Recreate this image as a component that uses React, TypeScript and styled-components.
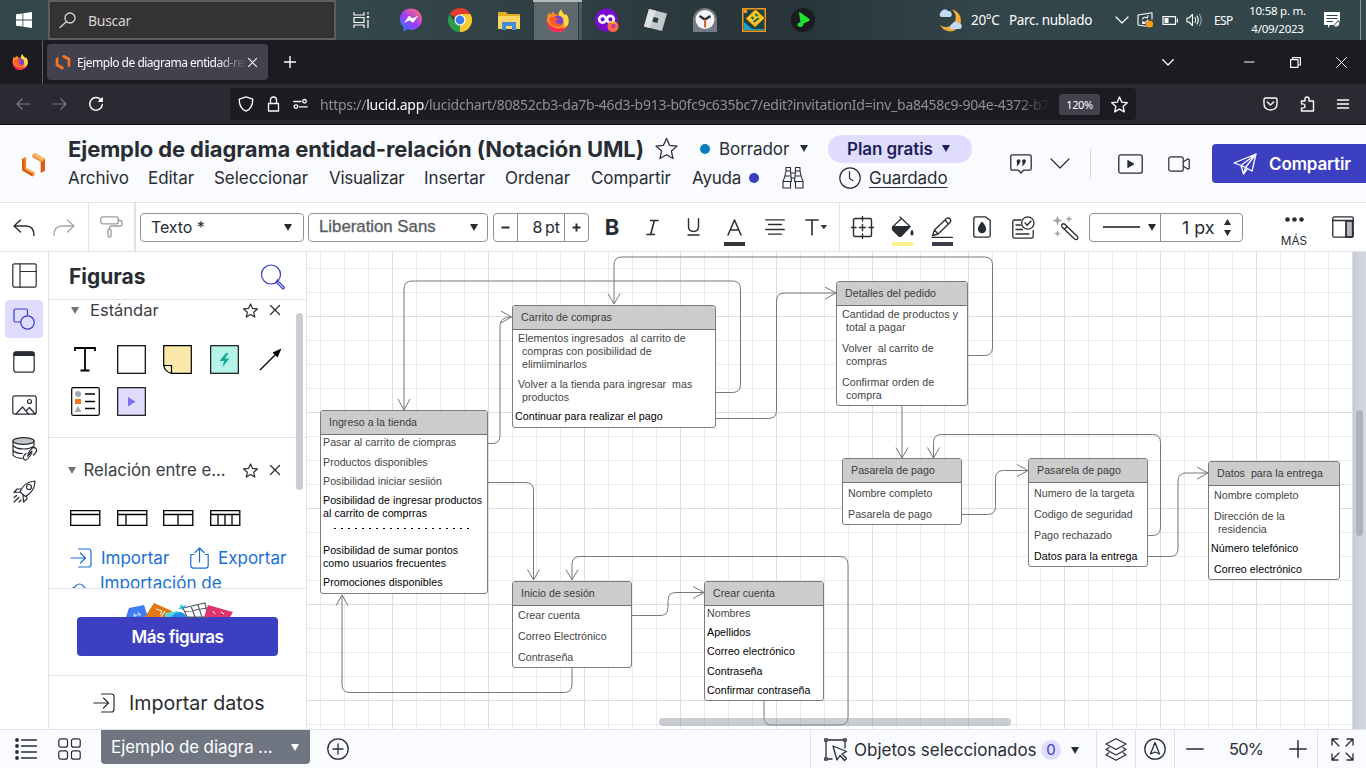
import React from "react";
import styled, { createGlobalStyle, css } from "styled-components";

const UI = '"Inter", "Liberation Sans", sans-serif';
const SYS = '"Noto Sans", "Open Sans", sans-serif';

const Global = createGlobalStyle`
  * { box-sizing: border-box; }
  html, body { margin: 0; padding: 0; }
  body { width: 1366px; height: 768px; overflow: hidden; background: #fff; color: #282c33; font-family: ${UI}; }
  svg { display: block; flex: none; overflow: visible; }
`;

const Screen = styled.div`
  display: flex;
  flex-direction: column;
  width: 1366px;
  height: 768px;
  overflow: hidden;
`;

const Icon = styled.svg<{ $w?: number }>`
  fill: none;
  stroke: currentColor;
  stroke-width: ${(p) => p.$w ?? 1.2};
  stroke-linecap: round;
  stroke-linejoin: round;
`;

/* ---------- Windows task bar ---------- */
const TaskBar = styled.div`
  display: flex;
  align-items: center;
  height: 40px;
  flex: none;
  color: #fff;
  font-family: ${SYS};
  background: linear-gradient(90deg, #34474b 0, #34474b 25%, #2f3f43 42%, #28343700 55%), linear-gradient(90deg, #293538 0, #293538 58%, #32454a 72%, #33474b 100%);
`;
const StartCell = styled.div`
  width: 48px;
  display: flex;
  justify-content: center;
`;
const SearchBox = styled.div`
  width: 288px;
  height: 40px;
  border: 2px solid #5d5f5f;
  background: #333;
  display: flex;
  align-items: center;
  padding-left: 9px;
  gap: 12px;
  font-size: 14px;
  letter-spacing: -0.3px;
  color: #d6d6d6;
`;
const AppCell = styled.div<{ $active?: boolean }>`
  width: 49px;
  height: 40px;
  display: flex;
  align-items: center;
  justify-content: center;
  ${(p) =>
    p.$active &&
    css`
      background: linear-gradient(90deg, #2d393c 0 1px, #5d696c 1px 45px, #2d393c 45px 46px, #4b5a5d 46px 49px);
      border-top: 2px solid #b4b8b8;
      padding-bottom: 2px;
    `}
`;
const Apps = styled.div`
  display: flex;
  padding-left: 1px;
  width: 602px;
`;
const Weather = styled.div`
  display: flex;
  align-items: center;
  width: 177px;
  font-size: 13.5px;
  letter-spacing: -0.32px;
  white-space: nowrap;
`;
const Temp = styled.span`
  width: 38px;
  margin-left: 8px;
`;
const Tray = styled.div`
  display: flex;
  align-items: center;
  gap: 8px;
`;
const Lang = styled.span`
  width: 35px;
  margin-left: 3px;
  font-size: 12px;
  letter-spacing: -0.67px;
`;
const Clock = styled.div`
  width: 57px;
  font-size: 11.5px;
  line-height: 18px;
  letter-spacing: -0.25px;
  text-align: center;
  white-space: nowrap;
  margin: 0 18px 1px 0;
`;
const DesktopEdge = styled.div`
  width: 1px;
  height: 40px;
  background: #8a9699;
  margin-left: 19px;
`;

/* ---------- Browser chrome ---------- */
const TabStrip = styled.div`
  display: flex;
  align-items: center;
  height: 44px;
  flex: none;
  background: #1c1b22;
  color: #fbfbfe;
  font-family: ${SYS};
`;
const PinnedTab = styled.div`
  width: 43px;
  height: 44px;
  border-right: 1px solid #5b5b66;
  display: flex;
  align-items: center;
  padding-left: 12px;
`;
const Tab = styled.div`
  width: 221px;
  height: 36px;
  margin-left: 4px;
  border-radius: 4px;
  background: #42414d;
  display: flex;
  align-items: center;
  padding: 0 11px 0 8px;
`;
const TabTitle = styled.div`
  width: 169px;
  margin-left: 6px;
  margin-right: 2px;
  overflow: hidden;
  white-space: nowrap;
  font-size: 12px;
  letter-spacing: -0.5px;
  mask-image: linear-gradient(90deg, #000 0, #000 83%, transparent 100%);
`;
const NewTab = styled.div`
  margin-left: 16px;
  width: 878px;
`;
const WindowButtons = styled.div`
  display: flex;
  align-items: center;
  gap: 35px;
`;
const NavBar = styled.div`
  display: flex;
  align-items: center;
  height: 41px;
  flex: none;
  background: #2b2a33;
  border-bottom: 1px solid #0c0c0d;
  color: #fbfbfe;
  font-family: ${SYS};
`;
const NavButtons = styled.div`
  display: flex;
  align-items: center;
  gap: 21px;
  width: 230px;
  padding-left: 16px;
`;
const Dim = styled.span`
  color: #7b7a86;
  display: flex;
`;
const UrlField = styled.div`
  width: 906px;
  height: 32px;
  border-radius: 4px;
  background: #1c1b22;
  display: flex;
  align-items: center;
  padding-left: 8px;
`;
const UrlIcons = styled.div`
  display: flex;
  align-items: center;
  gap: 13px;
  width: 82px;
`;
const Url = styled.div`
  width: 731px;
  overflow: hidden;
  white-space: nowrap;
  font-size: 14px;
  letter-spacing: -0.25px;
  color: #8f8f98;
  mask-image: linear-gradient(90deg, #000 0, #000 95%, transparent 100%);
  b { font-weight: 400; color: #fbfbfe; }
`;
const ZoomChip = styled.div`
  width: 41px;
  height: 21px;
  margin: 0 11px 0 8px;
  border-radius: 3px;
  background: #42414d;
  font-size: 11px;
  line-height: 21px;
  letter-spacing: -0.4px;
  text-align: center;
`;
const NavExtras = styled.div`
  display: flex;
  align-items: center;
  gap: 22px;
  margin-left: 127px;
`;

/* ---------- Document header ---------- */
const Header = styled.header`
  display: flex;
  height: 78px;
  flex: none;
  background: #fafbfe;
  border-bottom: 1px solid #dfe3e8;
`;
const LogoBox = styled.div`
  flex: none;
  width: 68px;
  padding: 27px 0 0 21px;
`;
const DocInfo = styled.div`
  flex: none;
  width: 942px;
  padding-top: 9px;
`;
const TitleRow = styled.div`
  display: flex;
  align-items: center;
  height: 29px;
  white-space: nowrap;
  font-size: 17px;
  letter-spacing: -0.08px;
`;
const Title = styled.h1`
  margin: 0;
  width: 587px;
  font-size: 22px;
  font-weight: 700;
  letter-spacing: -0.1px;
  color: #282c33;
`;
const StatusDot = styled.span`
  width: 10px;
  height: 10px;
  border-radius: 50%;
  background: #0c7cba;
  margin: 0 9px 0 22px;
`;
const Status = styled.span`
  width: 81px;
`;
const Caret = styled.span<{ $s?: number; $h?: number }>`
  width: 0;
  height: 0;
  flex: none;
  border-left: ${(p) => p.$s ?? 4}px solid transparent;
  border-right: ${(p) => p.$s ?? 4}px solid transparent;
  border-top: ${(p) => p.$h ?? 7}px solid currentColor;
`;
const PlanPill = styled.span`
  display: flex;
  align-items: center;
  gap: 9px;
  width: 144px;
  height: 28px;
  margin-left: 20px;
  padding-left: 19px;
  border-radius: 14px;
  background: #dfdcfe;
  color: #1f1c5c;
  font-weight: 600;
`;
const MenuRow = styled.nav`
  display: flex;
  align-items: center;
  height: 29px;
  font-size: 17px;
  letter-spacing: -0.05px;
  white-space: nowrap;
`;
const MenuItem = styled.span<{ $w: number; $ls?: number }>`
  width: ${(p) => p.$w}px;
  letter-spacing: ${(p) => p.$ls ?? -0.05}px;
`;
const HelpDot = styled.span`
  width: 10px;
  height: 10px;
  border-radius: 50%;
  background: #3a3ec4;
  margin-right: 23px;
`;
const ClockSlot = styled.span`
  margin-left: 35px;
`;
const Saved = styled.span`
  margin-left: 8px;
  text-decoration: underline;
  text-decoration-thickness: 1px;
  text-underline-offset: 3px;
`;
const HeaderTools = styled.div`
  display: flex;
  flex: none;
  align-items: center;
  width: 202px;
`;
const HeaderRule = styled.div`
  width: 1px;
  height: 29px;
  margin: 0 27px 0 20px;
  background: #d5d9df;
`;
const ShareButton = styled.button`
  flex: 1;
  height: 39px;
  margin-top: 19px;
  padding: 0 0 0 21px;
  border: 0;
  border-radius: 4px 0 0 4px;
  background: #3d3fc1;
  color: #fff;
  display: flex;
  align-items: center;
  gap: 12px;
  font: 600 17px ${UI};
  letter-spacing: -0.12px;
`;

/* ---------- Format toolbar ---------- */
const Toolbar = styled.div`
  display: flex;
  align-items: center;
  height: 49px;
  flex: none;
  background: #fff;
  border-bottom: 1px solid #dfe3e8;
`;
const ToolGroup = styled.div<{ $w: number; $rule?: number }>`
  display: flex;
  flex: none;
  align-items: center;
  height: 48px;
  width: ${(p) => p.$w}px;
  border-right: ${(p) => p.$rule ?? 0}px solid #dfe1e5;
`;
const Select = styled.div<{ $w: number; $gap: number; $fade?: boolean }>`
  width: ${(p) => p.$w}px;
  height: 29px;
  margin-left: ${(p) => p.$gap}px;
  padding: 0 11px 0 10px;
  border: 1px solid #8d939c;
  border-radius: 4px;
  display: flex;
  align-items: center;
  justify-content: space-between;
  font-size: 16px;
  letter-spacing: -0.1px;
  ${(p) =>
    p.$fade &&
    css`
      font-family: "Liberation Sans", Arial, sans-serif;
      padding-right: 9px;
      font-size: 16.8px;
      letter-spacing: 0;
    `}
`;
const FontName = styled.span`
  color: #54575d;
  -webkit-text-stroke: 0.35px #6a6d73;
`;
const Stepper = styled.div`
  display: flex;
  width: 96px;
  height: 29px;
  margin-left: 5px;
  border: 1px solid #8d939c;
  border-radius: 4px;
  line-height: 28px;
  font-size: 17px;
`;
const StepButton = styled.span`
  flex: 1;
  display: flex;
  align-items: center;
  justify-content: center;
`;
const StepValue = styled.span`
  width: 48px;
  border-left: 1px solid #8d939c;
  border-right: 1px solid #8d939c;
  text-align: right;
  padding-right: 4px;
  font-size: 16px;
  line-height: 27px;
  word-spacing: -2px;
`;
const ToolCell = styled.div<{ $w: number; $bar?: string }>`
  position: relative;
  flex: none;
  width: ${(p) => p.$w}px;
  height: 48px;
  display: flex;
  align-items: center;
  justify-content: center;
  ${(p) =>
    p.$bar &&
    css`
      &::after {
        content: "";
        position: absolute;
        left: calc(50% - 10.5px);
        bottom: 5px;
        width: 21px;
        height: 4px;
        background: ${p.$bar};
      }
    `}
`;
const BoldGlyph = styled.b`
  font-size: 22px;
  font-weight: 700;
`;
const LineStyle = styled.div`
  display: flex;
  flex: none;
  width: 154px;
  height: 29px;
  margin-left: 4px;
  border: 1px solid #8d939c;
  border-radius: 4px;
  align-items: center;
`;
const LineSample = styled.span`
  width: 37px;
  height: 2px;
  margin: 0 8px 0 13px;
  background: #4d5057;
`;
const LineWidth = styled.div`
  display: flex;
  align-items: center;
  height: 27px;
  margin-left: 4px;
  padding-left: 21px;
  border-left: 1px solid #8d939c;
  font-size: 17.8px;
  gap: 10px;
  white-space: nowrap;
`;
const More = styled.div`
  display: flex;
  flex: none;
  flex-direction: column;
  align-items: center;
  width: 30px;
  margin: 11px 23px 0 36px;
  gap: 13px;
  font-size: 11.8px;
  line-height: 13px;
`;

/* ---------- Work area ---------- */
const Main = styled.main`
  display: flex;
  height: 477px;
  flex: none;
`;
const Rail = styled.div`
  width: 49px;
  flex: none;
  border-right: 1px solid #dfe3e8;
  display: flex;
  flex-direction: column;
  align-items: center;
  padding-top: 4.500px;
  gap: 5.300px;
`;
const RailButton = styled.div<{ $active?: boolean }>`
  width: 38px;
  height: 38px;
  flex: none;
  border-radius: 4px;
  display: flex;
  align-items: center;
  justify-content: center;
  background: ${(p) => (p.$active ? "#dfdcfe" : "transparent")};
  color: ${(p) => (p.$active ? "#3a3ec4" : "#282c33")};
`;
const Panel = styled.aside`
  width: 258px;
  flex: none;
  border-right: 1px solid #dfe3e8;
  display: flex;
  flex-direction: column;
`;
const PanelHead = styled.div`
  height: 48px;
  flex: none;
  border-bottom: 1px solid #dfe3e8;
  display: flex;
  align-items: center;
  justify-content: space-between;
  padding: 1px 20px 0 20px;
  font-size: 21px;
  font-weight: 700;
`;
const PanelBody = styled.div`
  display: flex;
  height: 289px;
  flex: none;
  overflow: hidden;
  border-bottom: 1px solid #dfe3e8;
`;
const Sections = styled.div`
  width: 247px;
`;
const Section = styled.section<{ $h: number }>`
  width: 257px;
  height: ${(p) => p.$h}px;
  border-bottom: 1px solid #dfe3e8;
`;
const SectionHead = styled.div<{ $left: number; $gap: number; $top: number }>`
  display: flex;
  align-items: center;
  height: 20px;
  margin-top: ${(p) => p.$top}px;
  padding-left: ${(p) => p.$left}px;
  gap: ${(p) => p.$gap}px;
  color: #6d717a;
`;
const SectionName = styled.span<{ $w: number; $size: number }>`
  width: ${(p) => p.$w}px;
  font-size: ${(p) => p.$size}px;
  white-space: nowrap;
  color: #3a3e45;
`;
const SectionTools = styled.span`
  display: flex;
  align-items: center;
  gap: 12px;
  color: #282c33;
`;
const ShapeGrid = styled.div`
  display: grid;
  grid-template-columns: repeat(5, 46.3px);
  grid-auto-rows: 42px;
  margin: 18px 0 0 13px;
  align-items: center;
  justify-items: center;
`;
const TableRow = styled.div`
  display: flex;
  gap: 16px;
  margin: 30px 0 0 21px;
`;
const LinkRow = styled.div`
  display: flex;
  align-items: center;
  height: 22px;
  margin: 21px 0 0 21px;
  color: #1a6fd6;
  font-size: 17px;
  white-space: nowrap;
  gap: 9px;
`;
const LinkText = styled.span<{ $w: number }>`
  width: ${(p) => p.$w}px;
`;
const CutRow = styled.div`
  display: flex;
  gap: 12px;
  margin: 3px 0 0 22px;
  color: #1a6fd6;
  font-size: 17.1px;
  line-height: 22px;
  white-space: nowrap;
`;
const Scroll = styled.div`
  width: 7px;
  height: 177px;
  margin-top: 13px;
  border-radius: 4px;
  background: #c9ccd1;
  z-index: 1;
`;
const MoreShapes = styled.div`
  height: 87px;
  flex: none;
  border-bottom: 1px solid #dfe3e8;
  padding: 13px 0 0 28px;
`;
const MoreButton = styled.button`
  display: block;
  width: 201px;
  height: 39px;
  border: 0;
  border-radius: 4px;
  background: #3d3fc1;
  color: #fff;
  font: 600 17px ${UI};
  letter-spacing: -0.45px;
`;
const ImportData = styled.div`
  display: flex;
  align-items: center;
  gap: 14px;
  height: 53px;
  padding: 1px 0 0 44px;
  font-size: 19.6px;
  white-space: nowrap;
`;

/* ---------- Canvas ---------- */
const Canvas = styled.div`
  position: relative;
  width: 1046px;
  flex: none;
  height: 477px;
  overflow: hidden;
  background-color: #fff;
  background-image: linear-gradient(#dcdddf 1px, transparent 1px), linear-gradient(90deg, #dcdddf 1px, transparent 1px),
    linear-gradient(#ececee 1px, transparent 1px), linear-gradient(90deg, #ececee 1px, transparent 1px);
  background-size: 96px 96px, 96px 96px, 24px 24px, 24px 24px;
  background-position: 0 64px, 85px 0, 0 16px, 13px 0;
  font-family: "Liberation Sans", Arial, sans-serif;
`;
const Node = styled.div<{ $x: number; $y: number; $w: number; $h: number }>`
  position: absolute;
  left: ${(p) => p.$x - 307}px;
  top: ${(p) => p.$y - 252}px;
  width: ${(p) => p.$w}px;
  height: ${(p) => p.$h}px;
  border: 1px solid #7c7c7c;
  border-radius: 3px;
  background: #fff;
  overflow: hidden;
  font-size: 10.67px;
  line-height: 13px;
  letter-spacing: 0.02px;
  color: #444;
`;
const NodeHead = styled.div`
  height: 24px;
  padding-left: 8px;
  border-bottom: 1px solid #707070;
  background: #ccc;
  line-height: 22px;
  white-space: pre;
  color: #3c3c3c;
`;
const NodeRow = styled.div<{ $gap: number; $pad: number; $black?: boolean }>`
  margin-top: ${(p) => p.$gap}px;
  padding-left: ${(p) => p.$pad}px;
  white-space: pre;
  ${(p) => p.$black && "color: #000; letter-spacing: 0.045px;"}
`;
const Hang = styled.div`
  padding-left: 4px;
`;
const Dashes = styled.div`
  height: 1px;
  margin: 8px 13px 0 13px;
  background: repeating-linear-gradient(90deg, #000 0 2px, transparent 2px 7px);
`;
const Wires = styled.svg`
  position: absolute;
  left: 0;
  top: 0;
  fill: none;
  stroke: #777;
  stroke-width: 1;
`;
const HScroll = styled.div`
  position: absolute;
  left: 352px;
  top: 466px;
  width: 352px;
  height: 8px;
  border-radius: 4px;
  background: rgba(150, 155, 165, 0.5);
`;
const VTrack = styled.div`
  width: 13px;
  flex: none;
  background: linear-gradient(90deg, #c6cad3, #cfd3dc 40%, #d3d7e0);
  padding: 158px 0 0 3px;
`;
const VThumb = styled.div`
  width: 7px;
  height: 126px;
  border-radius: 4px;
  background: #adb2bd;
`;

/* ---------- Bottom bar ---------- */
const Bottom = styled.footer`
  display: flex;
  align-items: center;
  height: 39px;
  flex: none;
  border-top: 1px solid #dfe3e8;
  background: #fafbfe;
`;
const BottomIcons = styled.div`
  display: flex;
  align-items: center;
  gap: 21px;
  width: 101px;
  padding-left: 15px;
`;
const PageTab = styled.div`
  align-self: flex-start;
  display: flex;
  align-items: center;
  justify-content: space-between;
  width: 209px;
  height: 34px;
  padding: 0 11px 0 10px;
  border-radius: 0 0 4px 4px;
  background: #6f7682;
  color: #fff;
  font-size: 16.9px;
  word-spacing: -0.3px;
  white-space: nowrap;
`;
const AddPage = styled.div`
  width: 500px;
  padding-left: 17px;
`;
const BottomCell = styled.div<{ $w: number }>`
  display: flex;
  flex: none;
  align-items: center;
  justify-content: center;
  width: ${(p) => p.$w}px;
  height: 38px;
  border-left: 1px solid #dfe3e8;
`;
const Selection = styled(BottomCell)`
  justify-content: flex-start;
  padding: 2px 0 0 13px;
  font-size: 17px;
  white-space: nowrap;
`;
const SelectionText = styled.span`
  width: 183px;
  margin-left: 6px;
`;
const CountBadge = styled.span`
  width: 20px;
  height: 20px;
  margin: 0 10px 0 4px;
  border-radius: 50%;
  background: #dfdcfe;
  color: #3a3ec4;
  font-size: 15px;
  line-height: 20px;
  text-align: center;
`;
const ZoomCell = styled(BottomCell)`
  justify-content: flex-start;
  padding-left: 11px;
  font-size: 16.5px;
  letter-spacing: -0.8px;
`;
const ZoomValue = styled.span`
  width: 35px;
  margin: 0 25px 0 25px;
`;

/* ---------- Drawings ---------- */
const Firefox = ({ s }: { s: number }) => (
  <svg width={s} height={s} viewBox="0 0 24 24">
    <path d="M1 11C1.5 7 2 5 3.200 3.500 3.400 5 4 5.500 4.600 5.900 5.500 4.500 7 3 8.500 2.800 8 4 8.600 5 9.500 5.500L13 6C13.300 4 14 2 16 .4c.2 2.600 2 4 4 6.100 0 0 .8-.2.8-1.500C23 7.500 24 10.500 23.500 14 22.600 20 17.500 24 12 24 5.500 24 .5 18.500 1 11Z" fill="#ff8a1f" />
    <path d="M13 6C13.300 4 14 2 16 .4c.2 2.600 2 4 4 6.100 0 0 .8-.2.8-1.500C23 7.500 24 10.500 23.500 14c-.8 4-3 6-5.500 7 2-5 1-11-5-15Z" fill="#ffd93b" />
    <path d="M1 12c0 7 5 12 11 12 4.500 0 9-2.500 11-7-3 3-7 4-11 3.500C7 20 3 17 1 12Z" fill="#fb2458" />
    <circle cx="12.500" cy="12.300" r="5.600" fill="#7a3fd0" />
    <path d="M3 10c3-2.500 5-2 7-.5 1 .6 2.500.5 3.500.8-.6 1.600-2.500 1.900-3.500 2.400 0 2.500 3.500 3.500 6 2.300-2 3.500-7.500 4-10.500.5C4 14 3 12 3 10Z" fill="#ff5a2c" />
  </svg>
);

const LucidLogo = ({ s, flat }: { s: number; flat?: boolean }) => (
  <svg width={s} height={s} viewBox="0 0 24 24">
    <path d="M1 6.500 5 4.500V15l8 4.500V22l-2 1.500L1 17.500Z" fill={flat ? "#f2762a" : "#f28a2c"} />
    <path d="M11 2.500 13.500 1 23 6.500V18l-4 2V9.500l-8-4.500Z" fill={flat ? "#f2762a" : "#f28a2c"} />
    {!flat && <path d="M1 6.500v11l10 6v-3L3.500 16V8ZM23 6.500V18l-4 2V9.500l2 0Z" fill="#dc5c14" />}
    {!flat && <path d="M11 2.500 13.500 1 23 6.500 19.500 8.500ZM5 15 13 19.500 11 20.500 3.500 16Z" fill="#fbb668" />}
  </svg>
);

const Star = ({ s, w }: { s: number; w?: number }) => (
  <Icon width={s} height={s} viewBox="0 0 24 24" $w={w}>
    <path d="M12 1.500 15.200 8.700 23 9.500 17.100 14.700 18.800 22.500 12 18.500 5.200 22.500 6.900 14.700 1 9.500 8.800 8.700Z" />
  </Icon>
);

const Close = ({ s, w }: { s: number; w?: number }) => (
  <Icon width={s} height={s} viewBox="0 0 10 10" $w={w}>
    <path d="M.5.5 9.500 9.500M9.500.5.5 9.500" />
  </Icon>
);

const ImportIcon = () => (
  <Icon width="22" height="20" viewBox="0 0 22 20">
    <path d="M8.500 1H18.500Q21 1 21 3.500V16.500Q21 19 18.500 19H8.500M1 10H15.500M10.500 5 15.500 10 10.500 15" />
  </Icon>
);

const tableCuts = [[], [9], [15], [8, 15, 22]];

type Row = { t: string[]; gap: number; pad: number; black?: boolean; dash?: boolean };
type Entity = { x: number; y: number; w: number; h: number; title: string; rows: Row[] };

const entities: Entity[] = [
  {
    x: 320, y: 410, w: 168, h: 184, title: "Ingreso a la tienda",
    rows: [
      { t: ["Pasar al carrito de ciompras"], gap: 1, pad: 2 },
      { t: ["Productos disponibles"], gap: 6.5, pad: 2 },
      { t: ["Posibilidad iniciar sesiión"], gap: 6, pad: 2 },
      { t: ["Posibilidad de ingresar productos", "al carrito de comprras"], gap: 6, pad: 2, black: true },
      { t: [], gap: 0, pad: 0, dash: true },
      { t: ["Posibilidad de sumar pontos", "como usuarios frecuentes"], gap: 15.5, pad: 2, black: true },
      { t: ["Promociones disponibles"], gap: 6, pad: 2, black: true },
    ],
  },
  {
    x: 512, y: 305, w: 204, h: 123, title: "Carrito de compras",
    rows: [
      { t: ["Elementos ingresados  al carrito de", "compras con posibilidad de", "elimiiminarlos"], gap: 2.3, pad: 5 },
      { t: ["Volver a la tienda para ingresar  mas", "productos"], gap: 7, pad: 5 },
      { t: ["Continuar para realizar el pago"], gap: 6, pad: 2, black: true },
    ],
  },
  {
    x: 836, y: 281, w: 132, h: 125, title: "Detalles del pedido",
    rows: [
      { t: ["Cantidad de productos y", "total a pagar"], gap: 2.3, pad: 5 },
      { t: ["Volver  al carrito de", "compras"], gap: 7.5, pad: 5 },
      { t: ["Confirmar orden de", "compra"], gap: 8, pad: 5 },
    ],
  },
  {
    x: 842, y: 458, w: 120, h: 67, title: "Pasarela de pago",
    rows: [
      { t: ["Nombre completo"], gap: 3.5, pad: 5 },
      { t: ["Pasarela de pago"], gap: 8, pad: 5 },
    ],
  },
  {
    x: 1028, y: 458, w: 120, h: 109, title: "Pasarela de pago",
    rows: [
      { t: ["Numero de la targeta"], gap: 3.5, pad: 5 },
      { t: ["Codigo de seguridad"], gap: 8, pad: 5 },
      { t: ["Pago rechazado"], gap: 8, pad: 5 },
      { t: ["Datos para la entrega"], gap: 8, pad: 5, black: true },
    ],
  },
  {
    x: 1208, y: 461, w: 132, h: 119, title: "Datos  para la entrega",
    rows: [
      { t: ["Nombre completo"], gap: 2.5, pad: 5 },
      { t: ["Dirección de la", "residencia"], gap: 8, pad: 5 },
      { t: ["Número telefónico"], gap: 6, pad: 2, black: true },
      { t: ["Correo electrónico"], gap: 8, pad: 5, black: true },
    ],
  },
  {
    x: 512, y: 581, w: 120, h: 87, title: "Inicio de sesión",
    rows: [
      { t: ["Crear cuenta"], gap: 3, pad: 5 },
      { t: ["Correo Electrónico"], gap: 8, pad: 5 },
      { t: ["Contraseña"], gap: 8, pad: 5 },
    ],
  },
  {
    x: 704, y: 581, w: 120, h: 120, title: "Crear cuenta",
    rows: [
      { t: ["Nombres"], gap: 1, pad: 2 },
      { t: ["Apellidos"], gap: 6.2, pad: 2, black: true },
      { t: ["Correo electrónico"], gap: 6.2, pad: 2, black: true },
      { t: ["Contraseña"], gap: 6.2, pad: 2, black: true },
      { t: ["Confirmar contraseña"], gap: 6.2, pad: 2, black: true },
    ],
  },
];

const wires = [
  "M716 392.500H732.500Q740.500 392.500 740.500 384.500V289Q740.500 281 732.500 281H412Q404 281 404 289V410M398 399 404 410 410 399",
  "M968 355.500H984.500Q992.500 355.500 992.500 347.500V265Q992.500 257 984.500 257H622Q614 257 614 265V304M608 293.500 614 304 620 293.500",
  "M488 443.500H492Q500 443.500 500 435.500V325.500Q500 317 511.500 317M501 311 511.500 317 501 323",
  "M488 482.500H525.500Q533.500 482.500 533.500 490.500V580M527.500 569.500 533.500 580 539.500 569.500",
  "M716 418.500H768.500Q776.500 418.500 776.500 410.500V301Q776.500 293 784.500 293H836M825 287 836 293 825 299",
  "M902 406V458M896 447.500 902 458 908 447.500",
  "M1148 535.500H1152Q1160.500 535.500 1160.500 527.500V442.500Q1160.500 434.500 1152.500 434.500H941.500Q933.500 434.500 933.500 442.500V458M927.500 447.500 933.500 458 939.500 447.500",
  "M962 514.500H987.500Q995.500 514.500 995.500 506.500V478.500Q995.500 470.500 1003.500 470.500H1028M1017 464.500 1028 470.500 1017 476.500",
  "M1148 556.500H1170Q1178 556.500 1178 548.500V481Q1178 473 1186 473H1208M1197 467 1208 473 1197 479",
  "M632 615.500H660Q668 615.500 668 607.500V600.500Q668 592.500 676 592.500H704M693 586.500 704 592.500 693 598.500",
  "M572 668V684.500Q572 692.500 564 692.500H350Q342 692.500 342 684.500V595M336 605.500 342 595 348 605.500",
  "M764 701V717Q764 725 772 725H840Q848 725 848 717V564.500Q848 556.500 840 556.500H580Q572 556.500 572 564.500V580M566 569.500 572 580 578 569.500",
];

const TaskBarView = () => (
  <TaskBar>
    <StartCell>
      <svg width="16" height="16" viewBox="0 0 16 16" fill="#fff">
        <path d="M0 2.300 6.500 1.400V7.600H0ZM7.300 1.300 16 0V7.600H7.300ZM0 8.400H6.500V14.600L0 13.700ZM7.300 8.400H16V16L7.300 14.700Z" />
      </svg>
    </StartCell>
    <SearchBox>
      <Icon width="17" height="16" viewBox="0 0 17 16" $w={1.3}>
        <circle cx="11" cy="6" r="5" />
        <path d="M7.300 9.700 1 15.500" />
      </Icon>
      Buscar
    </SearchBox>
    <Apps>
      <AppCell>
        <Icon width="17" height="16" viewBox="0 0 17 16" $w={1.2}>
          <path d="M1 .5V3H11V.5M1 15.500V13H11V15.500M1 5.500H11V10.500H1ZM15 .5V2M15 8V15.500" />
          <path d="M15 4V6" strokeWidth="2.400" strokeLinecap="butt" />
        </Icon>
      </AppCell>
      <AppCell>
        <svg width="24" height="24" viewBox="0 0 24 24">
          <defs>
            <linearGradient id="msg" x1="0" y1="1" x2=".8" y2="0">
              <stop offset="0" stopColor="#1a86ff" />
              <stop offset=".5" stopColor="#9a3cff" />
              <stop offset="1" stopColor="#ff6a78" />
            </linearGradient>
          </defs>
          <path d="M12 .5C5.500.5 1 5.200 1 11.300c0 3.200 1.300 6 3.500 7.900V23.500l4-2.200c1.100.3 2.300.5 3.500.5 6.500 0 11-4.700 11-10.600S18.500.5 12 .5Z" fill="url(#msg)" />
          <path d="M5 15 9.300 8.500Q10.200 7.600 11.300 8.500L13.500 10.500 19 7.800 14.700 14Q13.700 15 12.700 14L10.500 12.200Z" fill="#fff" />
        </svg>
      </AppCell>
      <AppCell>
        <svg width="24" height="24" viewBox="0 0 24 24">
          <path d="M12 12 1.600 6A12 12 0 0 1 22.400 6Z" fill="#e33b2e" />
          <path d="M12 12 22.400 6A12 12 0 0 1 12 24Z" fill="#fdc92f" />
          <path d="M12 12 12 24A12 12 0 0 1 1.600 6L6.800 15Z" fill="#2a9c4a" />
          <path d="M12 6H22.400L17 15 12 24Z" fill="#fdc92f" />
          <circle cx="12" cy="12" r="5.600" fill="#fff" />
          <circle cx="12" cy="12" r="4.400" fill="#3a7df0" />
        </svg>
      </AppCell>
      <AppCell>
        <svg width="22" height="19" viewBox="0 0 22 19">
          <path d="M0 1H8L10 3H22V18H0Z" fill="#e5a91f" />
          <path d="M0 5H22V18H0Z" fill="#fcd566" />
          <path d="M4 19V11H18V19H14V15H8V19Z" fill="#3f8fd8" />
        </svg>
      </AppCell>
      <AppCell $active><Firefox s={23} /></AppCell>
      <AppCell>
        <svg width="24" height="24" viewBox="0 0 24 24">
          <circle cx="11.500" cy="12" r="11.500" fill="#7a0bd0" />
          <circle cx="7.600" cy="11.300" r="3.400" fill="none" stroke="#fff" strokeWidth="2.600" />
          <circle cx="15.400" cy="11.300" r="3.400" fill="none" stroke="#fff" strokeWidth="2.600" />
          <circle cx="18" cy="18.500" r="5.500" fill="#ff6a3a" />
          <path d="M14 15 18.500 12.500 21 15.500Z" fill="#ffc93a" />
          <circle cx="18.500" cy="18" r="2.300" fill="#c23ab0" />
        </svg>
      </AppCell>
      <AppCell>
        <svg width="23" height="22" viewBox="0 0 23 22">
          <path d="M5 0 23 4.500 18 22 0 17.500Z" fill="#c2c8cd" />
          <path d="M5 0 12 1.700 6 19 0 17.500Z" fill="#dfe3e6" />
          <path d="M9.500 8 14.500 9.300 13.300 14 8.300 12.700Z" fill="#2d3a3d" />
        </svg>
      </AppCell>
      <AppCell>
        <svg width="24" height="24" viewBox="0 0 24 24">
          <rect y="12" width="24" height="12" fill="#737c86" />
          <circle cx="12" cy="12" r="12" fill="#737c86" />
          <circle cx="12" cy="11.500" r="9.500" fill="#f4f4f4" />
          <path d="M6.500 8 12 11.500 17.500 8" stroke="#26303a" strokeWidth="2.400" fill="none" />
          <path d="M12 11.500V19.500" stroke="#e2622c" strokeWidth="2" />
        </svg>
      </AppCell>
      <AppCell>
        <svg width="24" height="24" viewBox="0 0 24 24">
          <rect width="24" height="24" fill="#f59a1b" />
          <rect x="1.500" y="1.500" width="21" height="21" fill="#16414f" />
          <path d="M1.500 1.500H5V5H1.500Z" fill="#f59a1b" />
          <path d="M2 22V14L10 21H22V22Z" fill="#19a6c9" />
          <path d="M13.500 1 23 10 13 19.500 3.500 10.500Z" fill="#ffc528" stroke="#5a3c00" />
          <path d="M9.500 9 11.500 11M13.500 6 15.500 8M11.500 14 17 10" stroke="#136a45" strokeWidth="2" />
        </svg>
      </AppCell>
      <AppCell>
        <svg width="24" height="24" viewBox="0 0 24 24">
          <circle cx="12" cy="12" r="12" fill="#191c1e" />
          <path d="M8 4.500Q8.500 3.500 10 5L18.500 11Q19.500 12 18 13L12.500 15.500Q12 19 9.500 19 6 18.500 6.500 16 7.500 14 9.500 14.500Z" fill="#1be42e" />
        </svg>
      </AppCell>
    </Apps>
    <Weather>
      <svg width="25" height="24" viewBox="0 0 25 24">
        <path d="M14 1.500A11 11 0 1 1 2 17 9.500 9.500 0 0 0 14 1.500Z" fill="#f3ab3c" />
        <path d="M3 9A3 3 0 0 1 3 4 4 4 0 0 1 10 3 3.200 3.200 0 0 1 12 9ZM13 21A3 3 0 0 1 14 16 4 4 0 0 1 20.500 15 3.300 3.300 0 0 1 22.500 21Z" fill="#c3daf6" />
      </svg>
      <Temp>20°C</Temp>
      Parc. nublado
    </Weather>
    <Tray>
      <Icon width="14" height="8" viewBox="0 0 14 8">
        <path d="M1 1 7 7 13 1" />
      </Icon>
      <Icon width="17" height="16" viewBox="0 0 17 16" $w={1.1}>
        <path d="M1 3 15 .8V7M1 3V13L9 14.300M6 9.500 5.500 11.500 8 11.500M10.500 5.500 11 3.500M5.500 7Q7 4 10 6M6 10Q9 11.500 10.800 8" />
        <circle cx="12.500" cy="12" r="3.600" fill="#ff9a1f" stroke="none" />
      </Icon>
      <Icon width="16" height="9" viewBox="0 0 16 9" $w={1.2}>
        <path d="M1 .6H13.500V8.400H1ZM15.400 3V6" />
        <path d="M2.500 2H6.500V7H2.500Z" fill="#fff" stroke="none" />
      </Icon>
      <Icon width="17" height="14" viewBox="0 0 17 14" $w={1.1}>
        <path d="M1 5H3L6.500 1.500V12.500L3 9H1ZM9 4.500Q10.500 7 9 9.500M11 3Q13.500 7 11 11" />
        <path d="M13.500 1.500Q17 7 13.500 12.500" opacity=".5" />
      </Icon>
      <Lang>ESP</Lang>
    </Tray>
    <Clock>10:58 p. m.<br />4/09/2023</Clock>
    <svg width="17" height="16" viewBox="0 0 17 16">
      <path d="M0 0H16V13H6L4 16V13H0Z" fill="#fff" />
      <path d="M2.500 3.500H13.500M2.500 6.500H13.500M2.500 9.500H9" stroke="#33474b" strokeWidth="1.200" />
      <path d="M9.500 14 14.500 8.500 16 12Q14 16 11 15Z" fill="#fff" stroke="#33474b" />
    </svg>
    <DesktopEdge />
  </TaskBar>
);

const BrowserChrome = () => (
  <>
    <TabStrip>
      <PinnedTab><Firefox s={16} /></PinnedTab>
      <Tab>
        <LucidLogo s={16} flat />
        <TabTitle>Ejemplo de diagrama entidad-relación</TabTitle>
        <Close s={9} w={1.2} />
      </Tab>
      <NewTab>
        <Icon width="12" height="12" viewBox="0 0 12 12" $w={1.4}><path d="M6 .5V11.500M.5 6H11.500" /></Icon>
      </NewTab>
      <Icon width="12" height="7" viewBox="0 0 12 7" $w={1.3}><path d="M.8.8 6 6 11.200.8" /></Icon>
      <WindowButtons>
        <span />
        <span />
        <Icon width="11" height="2" viewBox="0 0 11 2" $w={1.2}><path d="M.5 1H10" /></Icon>
        <Icon width="11" height="11" viewBox="0 0 11 11" $w={1.2}><path d="M.6 2.600H8V10.400H.6ZM2.600 2.500V.6H10.400V8H8" /></Icon>
        <Close s={11} w={0.9} />
      </WindowButtons>
    </TabStrip>
    <NavBar>
      <NavButtons>
        <Dim><Icon width="15" height="12" viewBox="0 0 15 12"><path d="M14 6H1M6 1 1 6 6 11" /></Icon></Dim>
        <Dim><Icon width="15" height="12" viewBox="0 0 15 12"><path d="M1 6H14M9 1 14 6 9 11" /></Icon></Dim>
        <Icon width="16" height="16" viewBox="0 0 16 16" $w={1.5}>
          <path d="M12.800 3.800A6.300 6.300 0 1 0 14.300 8.500" />
          <path d="M14.800.8V6H9.600Z" fill="#fff" stroke="none" />
        </Icon>
      </NavButtons>
      <UrlField>
        <UrlIcons>
          <Icon width="16" height="16" viewBox="0 0 16 16" $w={1.3}><path d="M8 .8 14.700 3.200Q15 12 8 15.200 1 12 1.300 3.200Z" /></Icon>
          <Icon width="13" height="16" viewBox="0 0 13 16" $w={1.3}><path d="M1.500 7.500H11.500V15H1.500ZM3.500 7.500V4Q3.500 1 6.500 1T9.500 4V7.500" /></Icon>
          <Icon width="15" height="10" viewBox="0 0 15 10" $w={1.3}>
            <path d="M.7 2.500H8M6.500 7.800H14.300" />
            <circle cx="11.500" cy="2.300" r="1.800" />
            <circle cx="3" cy="7.600" r="1.800" />
          </Icon>
        </UrlIcons>
        <Url>https://<b>lucid.app</b>/lucidchart/80852cb3-da7b-46d3-b913-b0fc9c635bc7/edit?invitationId=inv_ba8458c9-904e-4372-b7ae</Url>
        <ZoomChip>120%</ZoomChip>
        <Star s={17} w={1.9} />
      </UrlField>
      <NavExtras>
        <Icon width="15" height="14" viewBox="0 0 15 14" $w={1.4}><path d="M2.500 1H12.500Q14 1 14 2.500V6.500Q14 13 7.500 13T1 6.500V2.500Q1 1 2.500 1ZM4.300 5 7.500 8 10.700 5" /></Icon>
        <Icon width="15" height="16" viewBox="0 0 15 16" $w={1.4}><path d="M1.500 5H5V3Q5 1 7 1T9 3V5H13.500V15H1.500V12Q5 12.500 5 10T1.500 8Z" /></Icon>
        <Icon width="12" height="10" viewBox="0 0 12 10" $w={1.4}><path d="M.5 1H11.500M.5 5H11.500M.5 9H11.500" /></Icon>
      </NavExtras>
    </NavBar>
  </>
);

const HeaderView = () => (
  <Header>
    <LogoBox><LucidLogo s={25} /></LogoBox>
    <DocInfo>
      <TitleRow>
        <Title>Ejemplo de diagrama entidad-relación (Notación UML)</Title>
        <Star s={23} w={1.3} />
        <StatusDot />
        <Status>Borrador</Status>
        <Caret />
        <PlanPill>Plan gratis<Caret $s={4.5} /></PlanPill>
      </TitleRow>
      <MenuRow>
        <MenuItem $w={80}>Archivo</MenuItem>
        <MenuItem $w={66}>Editar</MenuItem>
        <MenuItem $w={115}>Seleccionar</MenuItem>
        <MenuItem $w={95} $ls={-0.25}>Visualizar</MenuItem>
        <MenuItem $w={81} $ls={-0.1}>Insertar</MenuItem>
        <MenuItem $w={86}>Ordenar</MenuItem>
        <MenuItem $w={101}>Compartir</MenuItem>
        <MenuItem $w={57} $ls={-0.2}>Ayuda</MenuItem>
        <HelpDot />
        <Icon width="22" height="23" viewBox="0 0 22 23" $w={1.1}>
          <path d="M4 1.500H8.500V5H4ZM13.500 1.500H18V5H13.500ZM4 5Q3 11 1 15.500V22H8.500V15.500H1M8.500 5 9.500 15.500H8.500M18 5Q19 11 21 15.500V22H13.500V15.500H21M13.500 5 12.500 15.500H13.500M9 7H13M9 12H13M3 10H8.500M13.500 10H19" />
        </Icon>
        <ClockSlot>
          <Icon width="22" height="22" viewBox="0 0 22 22" $w={1.2}>
            <circle cx="11" cy="11" r="10.200" />
            <path d="M10.500 4.500V11.500L14 13.500" />
          </Icon>
        </ClockSlot>
        <Saved>Guardado</Saved>
      </MenuRow>
    </DocInfo>
    <HeaderTools>
      <Icon width="22" height="20" viewBox="0 0 22 20" $w={1.3}>
        <path d="M2.500.8H19.500Q21.200.8 21.200 2.500V14.500Q21.200 16.200 19.500 16.200H13.500L11 19 8.500 16.200H2.500Q.8 16.200.8 14.500V2.500Q.8.8 2.500.8Z" />
        <path d="M7 7.300a1.500 1.500 0 1 1 2.500 1Q9 10.500 7 11.500M12.500 7.300a1.500 1.500 0 1 1 2.500 1Q14.500 10.500 12.500 11.500" fill="currentColor" strokeWidth="1" />
      </Icon>
      <Icon width="20" height="11" viewBox="0 0 20 11" style={{ marginLeft: 18 }}><path d="M1 1 10 10 19 1" /></Icon>
      <HeaderRule />
      <Icon width="25" height="20" viewBox="0 0 25 20" $w={1.3}>
        <rect x=".8" y=".8" width="23.400" height="18.400" rx="2" />
        <path d="M10 6.500 16 10 10 13.500Z" fill="currentColor" strokeWidth=".8" />
      </Icon>
      <Icon width="22" height="16" viewBox="0 0 22 16" $w={1.2} style={{ marginLeft: 25 }}>
        <rect x=".8" y=".8" width="14.400" height="14.400" rx="2" />
        <path d="M15.500 5.800 20 2.800 21.200 3.500V12.500L20 13.200 15.500 10.200" />
      </Icon>
    </HeaderTools>
    <ShareButton>
      <Icon width="24" height="22" viewBox="0 0 24 22" $w={1.3}>
        <path d="M1 10 23 1 19 18 12.500 14.500 8 12.500ZM23 1 8 12.500 10.500 21 12.500 14.500 23 1M10.500 21 14.500 15.500" />
      </Icon>
      Compartir
    </ShareButton>
  </Header>
);

const ToolbarView = () => (
  <Toolbar>
    <ToolGroup $w={89} $rule={1}>
      <Icon width="22" height="17" viewBox="0 0 22 17" $w={1.4} style={{ marginLeft: 13 }}><path d="M7.500 1 1 7 7.500 13M1 7H13Q21 7 21 16.500" /></Icon>
      <Icon width="22" height="17" viewBox="0 0 22 17" $w={1.4} style={{ marginLeft: 18, color: "#a4a7ac" }}><path d="M14.500 1 21 7 14.500 13M21 7H9Q1 7 1 16.500" /></Icon>
    </ToolGroup>
    <ToolGroup $w={47} $rule={2}>
      <Icon width="23" height="22" viewBox="0 0 23 22" $w={1.3} style={{ marginLeft: 11, color: "#9a9da3" }}>
        <rect x=".8" y=".8" width="17.500" height="7" rx="2" />
        <path d="M18.300 4.500H20Q22 4.500 22 6.500V8Q22 10 20 10H11.500Q9.500 10 9.500 12V13M9.500 13Q11 13 11 14.500V19.500Q11 21.200 9.500 21.200T8 19.500V14.500Q8 13 9.500 13" />
      </Icon>
    </ToolGroup>
    <Select $w={164} $gap={4}>Texto *<Caret /></Select>
    <Select $w={180} $gap={4} $fade><FontName>Liberation Sans</FontName><Caret /></Select>
    <Stepper>
      <StepButton><Icon width="9" height="3" viewBox="0 0 9 3" $w={2}><path d="M.5 1.500H8.500" strokeLinecap="butt" /></Icon></StepButton>
      <StepValue>8 pt</StepValue>
      <StepButton><Icon width="9" height="9" viewBox="0 0 9 9" $w={2}><path d="M.5 4.500H8.500M4.500.5V8.500" strokeLinecap="butt" /></Icon></StepButton>
    </Stepper>
    <ToolGroup $w={251} $rule={1}>
      <ToolCell $w={46}><BoldGlyph>B</BoldGlyph></ToolCell>
      <ToolCell $w={35}><Icon width="13" height="17" viewBox="0 0 14 17" $w={1.7}><path d="M5 1H13M1 16H9M9 1 5 16" /></Icon></ToolCell>
      <ToolCell $w={46}><Icon width="13" height="18" viewBox="0 0 13 18" $w={1.4}><path d="M1.500.8V8.500Q1.500 13.500 6.500 13.500T11.500 8.500V.8M1 17H12" /></Icon></ToolCell>
      <ToolCell $w={37} $bar="#333"><Icon width="15" height="17" viewBox="0 0 15 17" $w={1.5}><path d="M1 16 7.500 1 14 16M3.300 11H11.700" /></Icon></ToolCell>
      <ToolCell $w={44}><Icon width="20" height="16" viewBox="0 0 20 16" $w={1.3}><path d="M.7.800H19.300M3.500 5.500H16.500M.7 10.500H19.300M3.500 15.200H16.500" /></Icon></ToolCell>
      <ToolCell $w={38}>
        <Icon width="23" height="17" viewBox="0 0 23 17" $w={1.6}>
          <path d="M1 1H13M7 1V16" />
          <path d="M16.500 6.500H21.500L19 9.500Z" fill="currentColor" strokeWidth=".8" />
        </Icon>
      </ToolCell>
    </ToolGroup>
    <ToolCell $w={44}><Icon width="23" height="23" viewBox="0 0 23 23" $w={1.4}><rect x="2.500" y="2.500" width="18" height="18" rx="1.500" /><path d="M11.500.5V5M11.500 18V22.500M.5 11.500H5M18 11.500H22.500M11.500 8.500V14.500M8.500 11.500H14.500" /></Icon></ToolCell>
    <ToolCell $w={37} $bar="#fbf28f">
      <Icon width="22" height="22" viewBox="0 0 22 22" $w={1.2}>
        <path d="M8 1 18 10.500 9.500 19.500Q8 21 6.500 19.500L1 14Q-.5 12.500 1 10.500L9.500 2.500" />
        <path d="M1 10.500H18L9.500 19.500Q8 21 6.500 19.500L1 14Q0 12.500 1 10.500ZM20 14.500Q22 17.500 20 19 18 17.500 20 14.500" fill="currentColor" />
      </Icon>
    </ToolCell>
    <ToolCell $w={42} $bar="#3b404a">
      <Icon width="22" height="21" viewBox="0 0 22 21" $w={1.3}><path d="M1 20.300H21.500M1.500 18.500 3.500 13 15.500 1.500Q17.500.2 19 2T19 5.500L7 17ZM14 3 17.500 7M3.500 13 7 17" /></Icon>
    </ToolCell>
    <ToolCell $w={38}>
      <Icon width="18" height="22" viewBox="0 0 18 22" $w={1.3}><path d="M2.500.8H12.500L17.200 4.500V19.500Q17.200 21.200 15.500 21.200H2.500Q.8 21.200.8 19.500V2.500Q.8.800 2.500.8Z" /><path d="M9 6.500Q12.500 11 12.500 13A3.500 3.500 0 0 1 5.500 13Q5.500 11 9 6.500Z" fill="currentColor" /></Icon>
    </ToolCell>
    <ToolCell $w={44}>
      <Icon width="23" height="23" viewBox="0 0 23 23" $w={1.3}><path d="M9 4H2.500Q.8 4 .8 5.700V20.500Q.8 22.200 2.500 22.200H19.500Q21.200 22.200 21.200 20.500V14.500M4 9H8.500M4 13.500H10.500M4 18H17" /><circle cx="15.800" cy="7" r="6.200" /><path d="M13 7 15.200 9.200 19 5" /></Icon>
    </ToolCell>
    <ToolCell $w={40}>
      <Icon width="27" height="25" viewBox="0 0 27 25" $w={1.3}>
        <path d="M5.500.5 6.800 4 10.300 5.500 6.800 7 5.500 10.500 4.200 7 .5 5.500 4.200 4ZM17 .5 18 3 20.500 4 18 5 17 7.500 16 5 13.500 4 16 3ZM5.500 15 6.500 17.500 9 18.500 6.500 19.500 5.500 22 4.500 19.500 2 18.500 4.500 17.500Z" fill="#a4a7ac" stroke="none" />
        <path d="M10 9.500Q11.500 8 13 9.500L25.500 21.500Q26.500 23 25.500 24 24 25 22.500 24L10 12Q9 10.500 10 9.500M12.500 14 15 11.500" />
      </Icon>
    </ToolCell>
    <LineStyle>
      <LineSample />
      <Caret />
      <LineWidth>
        1 px
        <svg width="7" height="17" viewBox="0 0 7 17" fill="#282c33"><path d="M3.500 0 7 6H0ZM3.500 17 0 11H7Z" /></svg>
      </LineWidth>
    </LineStyle>
    <More>
      <svg width="19" height="5" viewBox="0 0 19 5" fill="#282c33"><circle cx="2.500" cy="2.500" r="2.300" /><circle cx="9.500" cy="2.500" r="2.300" /><circle cx="16.500" cy="2.500" r="2.300" /></svg>
      MÁS
    </More>
    <Icon width="22" height="22" viewBox="0 0 22 22" $w={1.3}><path d="M14 5H20.500V21H14Z" fill="#b5b8bd" /><rect x=".8" y=".8" width="20.400" height="20.400" rx="1.500" /><path d="M.8 4.500H21.200M14 4.500V21" /></Icon>
  </Toolbar>
);

const RailView = () => (
  <Rail>
    <RailButton><Icon width="25" height="25" viewBox="0 0 25 25"><rect x=".8" y=".8" width="23.400" height="23.400" rx="1.500" /><path d="M8 .8V24M8 8.500H24" /></Icon></RailButton>
    <RailButton $active><Icon width="22" height="22" viewBox="0 0 22 22"><path d="M7.500 14H2.500Q1 14 1 12.500V2.500Q1 1 2.500 1H13Q14.500 1 14.500 2.500V7" /><circle cx="14.500" cy="14.500" r="6.700" /></Icon></RailButton>
    <RailButton><Icon width="22" height="22" viewBox="0 0 22 22"><rect x=".8" y=".8" width="20.400" height="20.400" rx="2.500" /><path d="M1 4.500V2.500Q1 1 2.500 1H19.500Q21 1 21 2.500V4.500Z" fill="currentColor" /></Icon></RailButton>
    <RailButton><Icon width="25" height="20" viewBox="0 0 25 20"><rect x=".8" y=".8" width="23.400" height="18.400" rx="2" /><circle cx="17.500" cy="6.500" r="2" /><path d="M4 19 10.500 12 16.500 19M14 16 17.500 12.500 23 19" /></Icon></RailButton>
    <RailButton>
      <Icon width="25" height="24" viewBox="0 0 25 24">
        <path d="M1 4V18Q3 21 10 21.500M1 8.500Q4 12 11.500 12 18 12 22 9M1 13.500Q4 16.500 10.500 16.500M22 4V8" />
        <ellipse cx="11.500" cy="4" rx="10.500" ry="3.300" fill="#c3c6ca" />
        <path d="M16 16.500 19.500 11.500Q21.500 9.500 24 11.500 25.500 13.500 23.500 16L21.500 18M20 16 16 21.500Q14 24 12 22.500 10.500 20.500 12 18.500L14 16.500M15.500 19 20 14" />
      </Icon>
    </RailButton>
    <RailButton>
      <Icon width="23" height="23" viewBox="0 0 23 23">
        <path d="M7 12Q11 2 22 1 22 11 12.500 16.500L7 12ZM8.500 9H4L1 12.500 7 12M13.500 15.500 14 19 10.500 22 10 15M1 17.500 3.500 15.500M1 22 6 17.500M6 22 8 20" />
        <circle cx="16" cy="7" r="2.500" />
      </Icon>
    </RailButton>
  </Rail>
);

const SectionActions = () => (
  <SectionTools><Star s={15} w={1.9} /><Close s={10} w={1.2} /></SectionTools>
);

const PanelView = () => (
  <Panel>
    <PanelHead>
      Figuras
      <Icon width="26" height="25" viewBox="0 0 26 25" style={{ color: "#3a3ec4" }}><circle cx="11" cy="10.500" r="9.500" /><path d="M18 17 24.500 23.500M16.500 18.500 23 25M24.500 23.500 23 25M17.800 15.500 16 18" /></Icon>
    </PanelHead>
    <PanelBody>
      <Sections>
        <Section $h={138}>
          <SectionHead $left={22} $gap={11} $top={0}>
            <Caret $s={4} />
            <SectionName $w={142} $size={16.5}>Estándar</SectionName>
            <SectionActions />
          </SectionHead>
          <ShapeGrid>
            <Icon width="22" height="26" viewBox="0 0 22 26" $w={1.8}><path d="M1 5V2H21V5M11 2V24M6.500 24.500H15.500" stroke="#000" strokeLinecap="butt" strokeLinejoin="miter" /></Icon>
            <svg width="29" height="29"><rect x=".7" y=".7" width="27.600" height="27.600" fill="#fff" stroke="#000" strokeWidth="1.200" /></svg>
            <svg width="29" height="29"><path d="M.7.700H28.300V28.300H8.500L.7 20.500Z" fill="#f9eaa9" stroke="#000" strokeWidth="1.200" /><path d="M.7 20.500H8.500V28.300Q2 27 .7 20.500Z" fill="#fff3c0" stroke="#000" strokeWidth="1.200" /></svg>
            <svg width="29" height="29"><rect x=".7" y=".7" width="27.600" height="27.600" fill="#b6f4e8" stroke="#000" strokeWidth="1.100" /><path d="M16 8 9.500 16H14L12.500 22 19.500 13.500H15L18.500 8Z" fill="#0fab9d" /></svg>
            <svg width="23" height="23"><path d="M1 22 18 5" stroke="#000" strokeWidth="1.300" /><path d="M22.500.5 13.500 4.500 18.500 9.500Z" fill="#000" /></svg>
            <svg width="29" height="29">
              <rect x=".7" y=".7" width="27.600" height="27.600" rx="1.500" fill="#fff" stroke="#000" strokeWidth="1.200" />
              <circle cx="7" cy="7" r="3" fill="#a2a6ad" />
              <rect x="4" y="12" width="6" height="5" fill="#f2761a" />
              <path d="M7 19 10.500 25H3.500Z" fill="#a2a6ad" />
              <path d="M14 7H24M14 14.500H24M14 21.500H24" stroke="#000" strokeWidth="1.300" />
            </svg>
            <svg width="29" height="29"><rect x=".7" y=".7" width="27.600" height="27.600" fill="#dfdcfe" stroke="#000" strokeWidth="1.100" /><path d="M11 10V19.500L18.500 14.700Z" fill="#7a72f2" /></svg>
          </ShapeGrid>
        </Section>
        <SectionHead $left={19} $gap={7.5} $top={22}>
          <Caret $s={4} />
          <SectionName $w={152} $size={16.8}>Relación entre e...</SectionName>
          <SectionActions />
        </SectionHead>
        <TableRow>
          {tableCuts.map((cuts, i) => (
            <Icon key={i} width="30.500" height="16" viewBox="0 0 30.500 16" $w={1.3}>
              <path d={"M.7.700H29.800V15.300H.7ZM.7 4.500H29.800" + cuts.map((c) => `M${c} 4.500V15.300`).join("")} stroke="#000" strokeLinecap="butt" strokeLinejoin="miter" />
            </Icon>
          ))}
        </TableRow>
        <LinkRow>
          <ImportIcon />
          <LinkText $w={80}>Importar</LinkText>
          <Icon width="19" height="22" viewBox="0 0 19 22"><path d="M4 7.500H.8V18.500Q.8 21.200 3.500 21.200H15.500Q18.200 21.200 18.200 18.500V7.500H15M9.500 15V1M5 5.500 9.500 1 14 5.500" /></Icon>
          <LinkText $w={68}>Exportar</LinkText>
        </LinkRow>
        <CutRow>
          <Icon width="17" height="22" viewBox="0 0 17 22"><path d="M.8 16.500Q4 15.500 5 13.500 8.500 10.500 12 13.500 12.500 16 16 16.500" /></Icon>
          Importación de
        </CutRow>
      </Sections>
      <Scroll />
    </PanelBody>
    <MoreShapes>
      <svg width="201" height="15" viewBox="0 0 201 15">
        <path d="M49 15 52 6 67 3 71 15Z" fill="#3f7df0" />
        <path d="M57 11 59 15M61 10 63 14M56 14 64 12" stroke="#cfe0ff" />
        <path d="M68 15 77 1 95 9 92 15Z" fill="#e2780f" />
        <path d="M79 7 85 9 83 13M88 9 84 15" stroke="#fff" fill="none" />
        <path d="M88 11 101 9 99 15H88Z" fill="#5ad7dc" />
        <path d="M104 2 106 4 110 3 107 6 108 9 104 7 101 7 103 5Z" fill="#37c6e8" />
        <path d="M94 15Q103 5 110 15Z" fill="#2390e8" />
        <path d="M106 6 128 1 131 15H110ZM107 10 130 6M114 4 118 15M121 3 125 15" fill="#fff" stroke="#5a5e66" strokeWidth="1.200" />
        <path d="M127 15 131 3 156 10 153 15Z" fill="#dd356f" />
        <path d="M136 9 138 12M144 10 147 12" stroke="#fff" />
      </svg>
      <MoreButton>Más figuras</MoreButton>
    </MoreShapes>
    <ImportData><ImportIcon />Importar datos</ImportData>
  </Panel>
);

const CanvasView = () => (
  <Canvas>
    {entities.map((e, i) => (
      <Node key={i} $x={e.x} $y={e.y} $w={e.w} $h={e.h}>
        <NodeHead>{e.title}</NodeHead>
        {e.rows.map((r, j) =>
          r.dash ? (
            <Dashes key={j} />
          ) : (
            <NodeRow key={j} $gap={r.gap} $pad={r.pad} $black={r.black}>
              {r.t.map((line, k) => (k > 0 && !r.black ? <Hang key={k}>{line}</Hang> : <div key={k}>{line}</div>))}
            </NodeRow>
          )
        )}
      </Node>
    ))}
    <Wires width="1046" height="477" viewBox="307 252 1046 477">
      {wires.map((d, i) => <path key={i} d={d} />)}
    </Wires>
    <HScroll />
  </Canvas>
);

const BottomView = () => (
  <Bottom>
    <BottomIcons>
      <Icon width="22" height="22" viewBox="0 0 22 22" $w={1.3}>
        <path d="M6.500 2H21.500M6.500 8H21.500M6.500 14H21.500M6.500 20H21.500" />
        <path d="M2 2h.01M2 8h.01M2 14h.01M2 20h.01" strokeWidth="3.800" />
      </Icon>
      <Icon width="23" height="22" viewBox="0 0 23 22"><rect x=".8" y=".8" width="8.700" height="8.400" rx="2" /><rect x="13.500" y=".8" width="8.700" height="8.400" rx="2" /><rect x=".8" y="12.800" width="8.700" height="8.400" rx="2" /><rect x="13.500" y="12.800" width="8.700" height="8.400" rx="2" /></Icon>
    </BottomIcons>
    <PageTab>Ejemplo de diagra ...<Caret /></PageTab>
    <AddPage><Icon width="22" height="22" viewBox="0 0 22 22" $w={1.3}><circle cx="11" cy="11" r="10.200" /><path d="M11 6V16M6 11H16" /></Icon></AddPage>
    <Selection $w={286}>
      <Icon width="24" height="24" viewBox="0 0 24 24" $w={1.3}>
        <path d="M4 2H19M2 4V19M21 4V10M4 21H8M9 8 13 22 16 17.500 20.500 22.500 22.500 20.500 18 16 22.500 13.500Z" />
        <path d="M.8.800H3.200V3.200H.8ZM19.800.800H22.200V3.200H19.800ZM.8 19.800H3.200V22.200H.8Z" />
      </Icon>
      <SelectionText>Objetos seleccionados</SelectionText>
      <CountBadge>0</CountBadge>
      <Caret $s={4.5} />
    </Selection>
    <BottomCell $w={39}><Icon width="22" height="23" viewBox="0 0 22 23" $w={1.2}><path d="M11 .8 21 6 11 11.500 1 6ZM4 9.500 1 11.500 11 17 21 11.500 18 9.500M4 14.800 1 16.800 11 22.300 21 16.800 18 14.800" /></Icon></BottomCell>
    <BottomCell $w={39}><Icon width="22" height="22" viewBox="0 0 22 22" $w={1.3}><circle cx="11" cy="11" r="10.200" /><path d="M11 4.500 15.500 16 11 14 6.500 16Z" /></Icon></BottomCell>
    <ZoomCell $w={143}>
      <Icon width="18" height="2" viewBox="0 0 18 2" $w={1.5}><path d="M.8 1H17.200" /></Icon>
      <ZoomValue>50%</ZoomValue>
      <Icon width="18" height="18" viewBox="0 0 18 18" $w={1.5}><path d="M9 .8V17.200M.8 9H17.200" /></Icon>
    </ZoomCell>
    <BottomCell $w={49}><Icon width="23" height="23" viewBox="0 0 23 23" $w={1.3}><path d="M1 7V1H7M1 1 8 8M16 1H22V7M22 1 15 8M1 16V22H7M1 22 8 15M16 22H22V16M22 22 15 15" /></Icon></BottomCell>
  </Bottom>
);

export default function App() {
  return (
    <Screen>
      <Global />
      <TaskBarView />
      <BrowserChrome />
      <HeaderView />
      <ToolbarView />
      <Main>
        <RailView />
        <PanelView />
        <CanvasView />
        <VTrack><VThumb /></VTrack>
      </Main>
      <BottomView />
    </Screen>
  );
}
